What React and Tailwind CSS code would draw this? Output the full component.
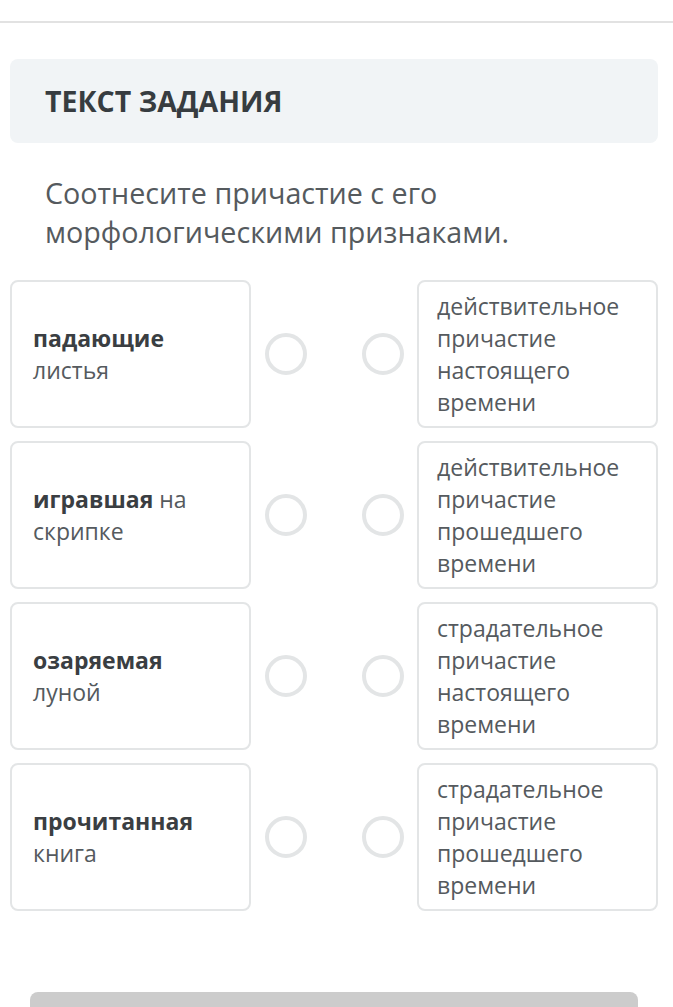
import React from 'react';

const pairs = [
  { bold: 'падающие', rest: 'листья', right: 'действительное причастие настоящего времени' },
  { bold: 'игравшая', rest: 'на скрипке', inline: true, right: 'действительное причастие прошедшего времени' },
  { bold: 'озаряемая', rest: 'луной', right: 'страдательное причастие настоящего времени' },
  { bold: 'прочитанная', rest: 'книга', right: 'страдательное причастие прошедшего времени' },
];

const Circle = () => (
  <div className="w-[42px] h-[42px] rounded-full border-[4px] border-[#e3e5e6]" />
);

const App = () => {
  return (
    <div className="min-h-[1007px] bg-white font-['Open_Sans',sans-serif] overflow-hidden">
      {/* верхняя полоса */}
      <div className="h-[21px]" />
      <div className="h-[2px] bg-[#e2e2e2]" />

      <div className="pl-[10px] pr-[15px] pt-[36px]">
        {/* Заголовок */}
        <div className="bg-[#f1f4f6] rounded-lg h-[84px] flex items-center pl-[35px] pr-[15px]">
          <h2 className="text-[28.5px] font-bold text-[#373c40]">ТЕКСТ ЗАДАНИЯ</h2>
        </div>

        {/* Вопрос */}
        <p className="mt-[30px] pl-[35px] text-[28.7px] leading-[39px] text-[#555a5e]">
          Соотнесите причастие с его морфологическими признаками.
        </p>

        {/* Пары */}
        <div className="mt-[29px] flex flex-col gap-[13px]">
          {pairs.map((p, i) => (
            <div key={i} className="flex items-center">
              <div className="w-[241px] h-[148px] border-2 border-[#e3e5e6] rounded-lg flex items-center px-[21px]">
                <p className="text-[23px] leading-[32px] text-[#555a5e]">
                  <span className="font-bold text-[#3a3e42]">{p.bold}</span>
                  {p.inline ? ' ' : <br />}
                  {p.rest}
                </p>
              </div>
              <div className="flex-1 flex items-center justify-center gap-[55px]">
                <Circle />
                <Circle />
              </div>
              <div className="w-[241px] h-[148px] border-2 border-[#e3e5e6] rounded-lg flex items-center px-[18px]">
                <p className="text-[23px] leading-[32px] text-[#555a5e]">{p.right}</p>
              </div>
            </div>
          ))}
        </div>
      </div>

      {/* Кнопка */}
      <div className="pl-[30px] pr-[35px] pt-[81px]">
        <div className="h-[40px] bg-[#cccccc] rounded-t-lg" />
      </div>
    </div>
  );
};

export default App;
